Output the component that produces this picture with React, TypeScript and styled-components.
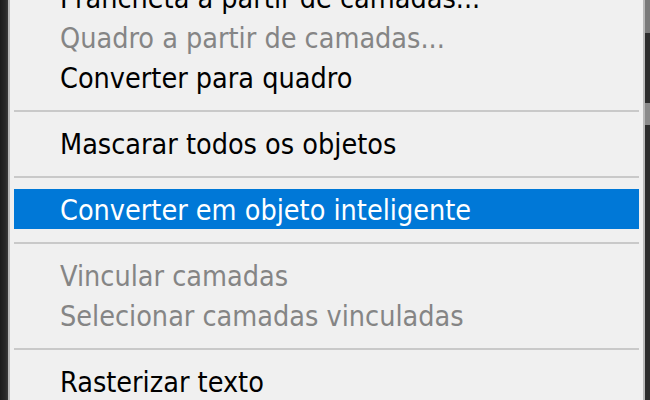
import React from "react";
import styled, { createGlobalStyle } from "styled-components";

const Global = createGlobalStyle`
  html, body {
    margin: 0;
    padding: 0;
    background: #242424;
    overflow: hidden;
  }
  #root {
    width: 650px;
    height: 400px;
    overflow: hidden;
  }
`;

const Screen = styled.div`
  display: flex;
  width: 650px;
  height: 400px;
  overflow: hidden;
  background: #252525;
`;

const EdgeLeft = styled.div`
  width: 8px;
  flex: none;
  background: linear-gradient(to right, #1c1c1c, #2a2a2a 70%, #3a3a3a);
`;

const EdgeRight = styled.div`
  width: 5px;
  flex: none;
  display: flex;
  flex-direction: column;
  background: #2c2c2c;
`;

const EdgeSegment = styled.div<{ $h: number; $c: string }>`
  height: ${(p) => p.$h}px;
  flex: none;
  background: ${(p) => p.$c};
`;

const Menu = styled.div`
  width: 637px;
  flex: none;
  box-sizing: border-box;
  margin-top: -23px;
  height: 440px;
  background: #f0f0f0;
  border-left: 2px solid #b9b9b9;
  border-right: 2px solid #b9b9b9;
  padding: 0 4px;
  display: flex;
  flex-direction: column;
  font-family: "DejaVu Sans Condensed", "DejaVu Sans", sans-serif;
  font-stretch: condensed;
  font-size: 28.5px;
`;

const Item = styled.div<{ $disabled?: boolean; $active?: boolean }>`
  height: 40px;
  flex: none;
  box-sizing: border-box;
  padding: 4px 0 0 46px;
  line-height: 36px;
  white-space: nowrap;
  color: ${(p) => (p.$active ? "#ffffff" : p.$disabled ? "#858585" : "#000000")};
  background: ${(p) => (p.$active ? "#0078d7" : "transparent")};
`;

const Separator = styled.div`
  height: 26px;
  flex: none;
  box-sizing: border-box;
  padding-top: 13px;
  &::before {
    content: "";
    display: block;
    height: 2px;
    background: #c9c9c9;
  }
`;

type Entry =
  | { kind: "item"; label: string; disabled?: boolean; active?: boolean }
  | { kind: "sep" };

const entries: Entry[] = [
  { kind: "item", label: "Prancheta a partir de camadas..." },
  { kind: "item", label: "Quadro a partir de camadas...", disabled: true },
  { kind: "item", label: "Converter para quadro" },
  { kind: "sep" },
  { kind: "item", label: "Mascarar todos os objetos" },
  { kind: "sep" },
  { kind: "item", label: "Converter em objeto inteligente", active: true },
  { kind: "sep" },
  { kind: "item", label: "Vincular camadas", disabled: true },
  { kind: "item", label: "Selecionar camadas vinculadas", disabled: true },
  { kind: "sep" },
  { kind: "item", label: "Rasterizar texto" },
];

export default function App() {
  return (
    <>
      <Global />
      <Screen>
        <EdgeLeft />
        <Menu>
          {entries.map((e, i) =>
            e.kind === "sep" ? (
              <Separator key={i} />
            ) : (
              <Item key={i} $disabled={e.disabled} $active={e.active}>
                {e.label}
              </Item>
            )
          )}
        </Menu>
        <EdgeRight>
          <EdgeSegment $h={33} $c="#7a7a7a" />
          <EdgeSegment $h={70} $c="#2c2c2c" />
          <EdgeSegment $h={22} $c="#8a8a8a" />
        </EdgeRight>
      </Screen>
    </>
  );
}
